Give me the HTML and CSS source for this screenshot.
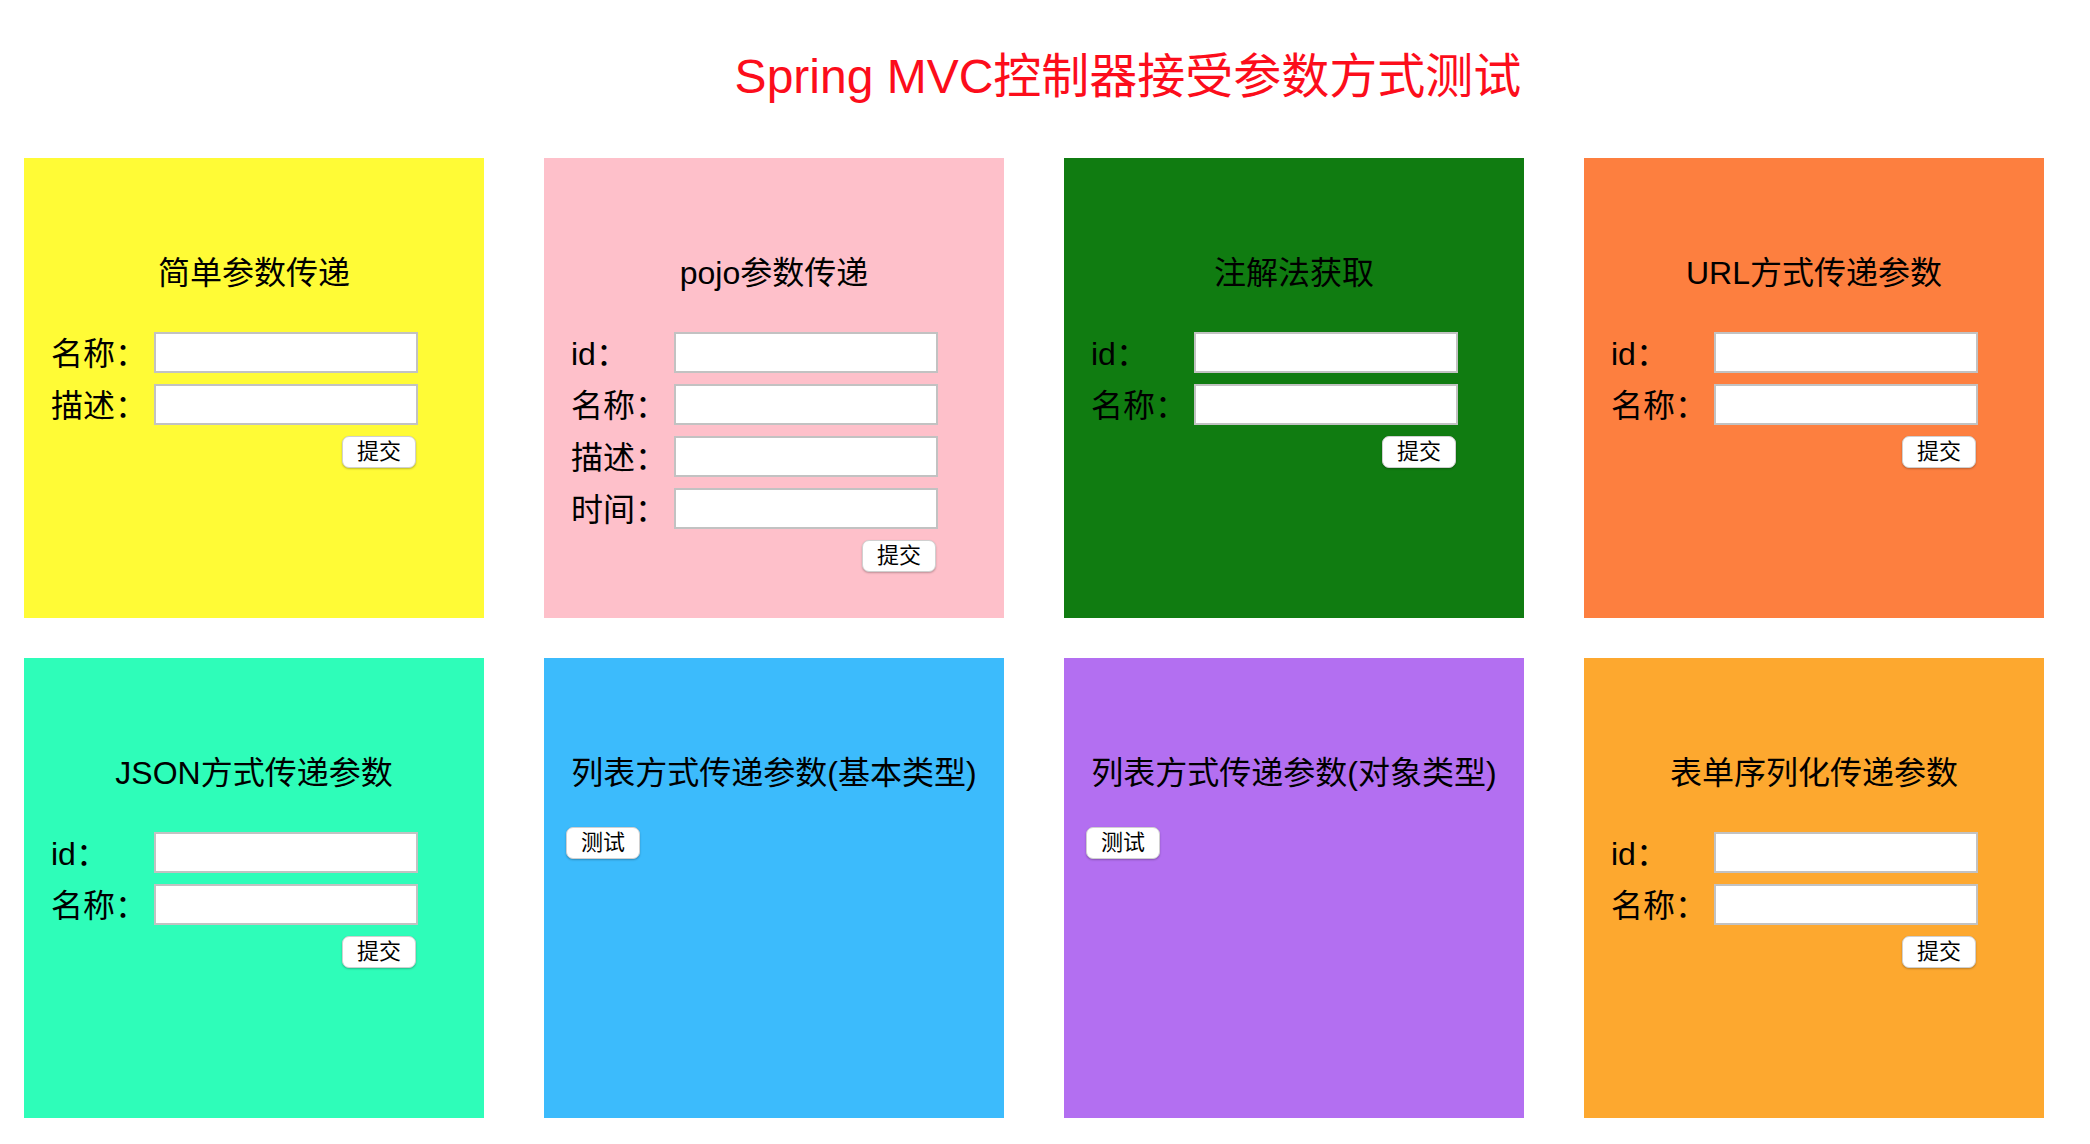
FILE: index.html
```html
<!DOCTYPE html>
<html lang="zh-CN">
<head>
<meta charset="utf-8">
<title>Spring MVC控制器接受参数方式测试</title>
<link rel="stylesheet" href="styles.css">
</head>
<body>
<h1 class="page-title">Spring MVC控制器接受参数方式测试</h1>
<main class="grid">
  <section class="card card-yellow">
    <h3 class="card-title">简单参数传递</h3>
    <form class="card-form">
      <div class="field"><label class="field-label">名称：</label><input class="field-input" type="text"></div>
      <div class="field"><label class="field-label">描述：</label><input class="field-input" type="text"></div>
      <div class="actions"><button type="button" class="btn">提交</button></div>
    </form>
  </section>
  <section class="card card-pink">
    <h3 class="card-title">pojo参数传递</h3>
    <form class="card-form">
      <div class="field"><label class="field-label">id：</label><input class="field-input" type="text"></div>
      <div class="field"><label class="field-label">名称：</label><input class="field-input" type="text"></div>
      <div class="field"><label class="field-label">描述：</label><input class="field-input" type="text"></div>
      <div class="field"><label class="field-label">时间：</label><input class="field-input" type="text"></div>
      <div class="actions"><button type="button" class="btn">提交</button></div>
    </form>
  </section>
  <section class="card card-green">
    <h3 class="card-title">注解法获取</h3>
    <form class="card-form">
      <div class="field"><label class="field-label">id：</label><input class="field-input" type="text"></div>
      <div class="field"><label class="field-label">名称：</label><input class="field-input" type="text"></div>
      <div class="actions"><button type="button" class="btn">提交</button></div>
    </form>
  </section>
  <section class="card card-orange">
    <h3 class="card-title">URL方式传递参数</h3>
    <form class="card-form">
      <div class="field"><label class="field-label">id：</label><input class="field-input" type="text"></div>
      <div class="field"><label class="field-label">名称：</label><input class="field-input" type="text"></div>
      <div class="actions"><button type="button" class="btn">提交</button></div>
    </form>
  </section>
  <section class="card card-teal">
    <h3 class="card-title">JSON方式传递参数</h3>
    <form class="card-form">
      <div class="field"><label class="field-label">id：</label><input class="field-input" type="text"></div>
      <div class="field"><label class="field-label">名称：</label><input class="field-input" type="text"></div>
      <div class="actions"><button type="button" class="btn">提交</button></div>
    </form>
  </section>
  <section class="card card-blue">
    <h3 class="card-title">列表方式传递参数(基本类型)</h3>
    <div class="card-test"><button type="button" class="btn btn-test">测试</button></div>
  </section>
  <section class="card card-purple">
    <h3 class="card-title">列表方式传递参数(对象类型)</h3>
    <div class="card-test"><button type="button" class="btn btn-test">测试</button></div>
  </section>
  <section class="card card-amber">
    <h3 class="card-title">表单序列化传递参数</h3>
    <form class="card-form">
      <div class="field"><label class="field-label">id：</label><input class="field-input" type="text"></div>
      <div class="field"><label class="field-label">名称：</label><input class="field-input" type="text"></div>
      <div class="actions"><button type="button" class="btn">提交</button></div>
    </form>
  </section>
</main>
</body>
</html>
```

FILE: styles.css
```css
html, body {
  margin: 0;
  padding: 0;
  background: #ffffff;
}

body {
  font-family: "Liberation Sans", "Noto Sans CJK SC", sans-serif;
  color: #000000;
}

.page-title {
  margin: 45px 0 49px;
  padding-left: 166px;
  font-size: 48px;
  line-height: 64px;
  font-weight: normal;
  color: #fc0d1b;
  text-align: center;
}

.grid {
  display: grid;
  grid-template-columns: repeat(4, 460px);
  grid-auto-rows: 460px;
  column-gap: 60px;
  row-gap: 40px;
  padding-left: 24px;
}

.card {
  box-sizing: border-box;
  padding: 93px 24px 0;
}

.card-yellow { background: #fffb36; }
.card-pink { background: #fec0ca; }
.card-green { background: #107c11; }
.card-orange { background: #fd7f3f; }
.card-teal { background: #2efdb9; }
.card-blue { background: #3cbbfc; }
.card-purple { background: #b36ff1; }
.card-amber { background: #fda82f; }

.card-title {
  margin: 0;
  font-size: 32px;
  line-height: 44px;
  font-weight: normal;
  text-align: center;
}

.card-form {
  margin: 37px 0 0;
}

.field {
  display: flex;
  align-items: center;
  height: 41px;
  margin-bottom: 11px;
}

.field-label {
  width: 106px;
  flex: none;
  font-size: 32px;
  line-height: 41px;
  padding: 3px 0 0 3px;
  box-sizing: border-box;
}

.field-input {
  box-sizing: border-box;
  width: 264px;
  height: 41px;
  margin: 0;
  padding: 0 6px;
  border: 2px solid #c2c2c2;
  background: #ffffff;
  font-size: 22px;
}

.actions {
  width: 368px;
  display: flex;
  justify-content: flex-end;
  margin-top: 1px;
}

.btn {
  box-sizing: border-box;
  height: 32px;
  min-width: 72px;
  margin: 0;
  padding: 0 14px;
  border: 1px solid #d0d0d0;
  border-radius: 7px;
  background: #ffffff;
  box-shadow: 0 1px 2px rgba(0, 0, 0, 0.25);
  font-family: "Liberation Sans", "Noto Sans CJK SC", sans-serif;
  font-size: 22px;
  line-height: 30px;
  color: #000000;
}

.card-test {
  margin-top: 32px;
}

.btn-test {
  margin-left: -2px;
}
```
